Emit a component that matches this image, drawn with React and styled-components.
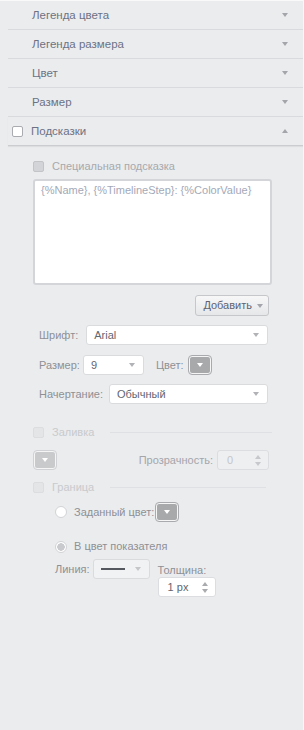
import React from 'react';
import styled, { createGlobalStyle } from 'styled-components';

const GlobalStyle = createGlobalStyle`
    html, body {
        margin: 0;
        padding: 0;
        background: #ebecee;
        font-family: "Liberation Sans", Arial, sans-serif;
    }
`;

const Panel = styled.div`
    width: 303px;
    height: 729px;
    background: #ebecee;
    border-top: 1px solid #f9f9fa;
    border-right: 1px solid #f7f7f8;
    border-bottom: 1px solid #b4b5b9;
    display: flex;
    flex-direction: column;
    font-size: 11px;
    line-height: 13px;
`;

const Header = styled.div`
    height: 28px;
    margin-left: 8px;
    padding-left: ${p => (p.$check ? 4 : 24)}px;
    padding-right: 15px;
    display: flex;
    align-items: center;
    gap: 8px;
    border-bottom: 1px solid ${p => (p.$last ? '#cbccd0' : '#d9dadd')};
    box-shadow: ${p => (p.$last ? '0 1px 1px rgba(0,0,0,0.06)' : 'none')};
    color: #6c7285;
    font-size: 11.5px;
`;

const HeaderTitle = styled.span`
    flex: 1;
`;

const Caret = styled.span`
    width: 0;
    height: 0;
    border-left: 3.5px solid transparent;
    border-right: 3.5px solid transparent;
    border-${p => (p.$up ? 'bottom' : 'top')}: 4px solid ${p => p.$color || '#a3a5aa'};
`;

const Box = styled.span`
    width: 11px;
    height: 11px;
    flex: none;
    border-radius: 2px;
    box-sizing: border-box;
    border: 1px solid ${p => p.$border};
    background: ${p => p.$fill};
`;

const Content = styled.div`
    padding: 0 31px 0 33px;
    display: flex;
    flex-direction: column;
`;

const Row = styled.div`
    display: flex;
    align-items: ${p => p.$align || 'center'};
    gap: ${p => p.$gap || 0}px;
    margin-top: ${p => p.$mt || 0}px;
    padding-left: ${p => p.$indent || 0}px;
    padding-right: ${p => p.$pr || 0}px;
    justify-content: ${p => p.$justify || 'flex-start'};
`;

const Label = styled.span`
    color: ${p => p.$color || '#8e9095'};
    white-space: nowrap;
    margin-right: ${p => p.$mr || 0}px;
    margin-left: ${p => p.$ml || 0}px;
    margin-top: ${p => p.$mt || 0}px;
`;

const TextArea = styled.div`
    flex: 1;
    height: 98px;
    background: #fff;
    border: 2px solid #d4d5d8;
    border-radius: 3px;
    padding: 3px 6px 1px;
    color: #a3a9b8;
`;

const Button = styled.div`
    height: 19px;
    padding: 0 5px 0 7px;
    display: flex;
    align-items: center;
    gap: 5px;
    border: 1px solid #c6c7ca;
    border-radius: 3px;
    background: linear-gradient(#f7f7f8, #e6e7e9);
    color: #5e6371;
    font-size: 11px;
`;

const Select = styled.div`
    width: ${p => p.$w || 0}px;
    height: 18px;
    flex: ${p => (p.$grow ? 1 : 'none')};
    display: flex;
    align-items: center;
    justify-content: space-between;
    padding: 0 8px 0 7px;
    background: ${p => (p.$disabled ? '#f1f2f3' : '#fff')};
    border: 1px solid #dadbdd;
    border-radius: 3px;
    color: #62666f;
`;

const ColorButton = styled.div`
    width: 20px;
    height: 16px;
    flex: none;
    display: flex;
    align-items: center;
    justify-content: center;
    background: ${p => (p.$disabled ? '#c9cacc' : '#a8a9ab')};
    border: 1px solid #f5f5f6;
    outline: 1px solid ${p => (p.$disabled ? '#d0d1d4' : '#a9aaad')};
    border-radius: 3px;
    margin: 1px;
`;

const Spin = styled.div`
    width: ${p => p.$w}px;
    height: 18px;
    display: flex;
    align-items: center;
    justify-content: space-between;
    padding: 0 7px 0 9px;
    background: ${p => (p.$disabled ? '#eeeff1' : '#fff')};
    border: 1px solid #dcdde0;
    border-radius: 3px;
    color: ${p => (p.$disabled ? '#c4c6ca' : '#62666f')};
`;

const SpinArrows = styled.span`
    display: flex;
    flex-direction: column;
    gap: 3px;
`;

const Divider = styled.span`
    flex: 1;
    height: 1px;
    background: #dfe0e3;
    margin-left: 8px;
    margin-right: ${p => p.$mr || 0}px;
`;

const Radio = styled.span`
    width: 12px;
    height: 12px;
    flex: none;
    box-sizing: border-box;
    border-radius: 50%;
    border: 1px solid #d2d3d6;
    background: ${p => (p.$on ? 'radial-gradient(circle, #c9cacd 0 3.5px, #fff 4px)' : '#fff')};
`;

const LineSample = styled.span`
    width: 24px;
    height: 2px;
    background: #55585e;
`;

const Stack = styled.div`
    display: flex;
    flex-direction: column;
    margin-left: 8px;
    margin-top: 5px;
`;

const headers = ['Легенда цвета', 'Легенда размера', 'Цвет', 'Размер'];

export default function App() {
    return (
        <>
            <GlobalStyle />
            <Panel>
                {headers.map(h => (
                    <Header key={h}>
                        <HeaderTitle>{h}</HeaderTitle>
                        <Caret />
                    </Header>
                ))}
                <Header $check $last>
                    <Box $border="#a9abb0" $fill="#fff" />
                    <HeaderTitle>Подсказки</HeaderTitle>
                    <Caret $up />
                </Header>

                <Content>
                    <Row $mt={14} $gap={8}>
                        <Box $border="#c3c4c7" $fill="#d3d4d7" />
                        <Label $color="#a7a9ad">Специальная подсказка</Label>
                    </Row>
                    <Row $mt={6}>
                        <TextArea>{'{%Name}, {%TimelineStep}: {%ColorValue}'}</TextArea>
                    </Row>
                    <Row $mt={10} $justify="flex-end" $pr={3}>
                        <Button>
                            Добавить
                            <Caret />
                        </Button>
                    </Row>
                    <Row $mt={9} $indent={6} $pr={4}>
                        <Label $mr={8}>Шрифт:</Label>
                        <Select $grow>
                            Arial
                            <Caret $color="#b0b2b6" />
                        </Select>
                    </Row>
                    <Row $mt={10} $indent={6}>
                        <Label $mr={3}>Размер:</Label>
                        <Select $w={44}>
                            9
                            <Caret $color="#b0b2b6" />
                        </Select>
                        <Label $ml={12} $mr={4}>Цвет:</Label>
                        <ColorButton>
                            <Caret $color="#fff" />
                        </ColorButton>
                    </Row>
                    <Row $mt={9} $indent={6} $pr={4}>
                        <Label $mr={6}>Начертание:</Label>
                        <Select $grow>
                            Обычный
                            <Caret $color="#b0b2b6" />
                        </Select>
                    </Row>

                    <Row $mt={22} $gap={8}>
                        <Box $border="#dcdde0" $fill="#e4e5e7" />
                        <Label $color="#c8cacd">Заливка</Label>
                        <Divider />
                    </Row>
                    <Row $mt={11} $justify="space-between" $pr={3}>
                        <ColorButton $disabled>
                            <Caret $color="#fff" />
                        </ColorButton>
                        <Row $gap={4}>
                            <Label $color="#a4a6ab">Прозрачность:</Label>
                            <Spin $w={34} $disabled>
                                0
                                <SpinArrows>
                                    <Caret $up $color="#c6c8cb" />
                                    <Caret $color="#c6c8cb" />
                                </SpinArrows>
                            </Spin>
                        </Row>
                    </Row>
                    <Row $mt={11} $gap={8}>
                        <Box $border="#dcdde0" $fill="#e4e5e7" />
                        <Label $color="#c8cacd">Граница</Label>
                        <Divider $mr={6} />
                    </Row>
                    <Row $mt={8} $indent={22} $gap={7}>
                        <Radio />
                        <Label $mr={-6}>Заданный цвет:</Label>
                        <ColorButton>
                            <Caret $color="#fff" />
                        </ColorButton>
                    </Row>
                    <Row $mt={18} $indent={22} $gap={7}>
                        <Radio $on />
                        <Label>В цвет показателя</Label>
                    </Row>
                    <Row $mt={6} $indent={22} $align="flex-start">
                        <Label $mr={3} $mt={4}>Линия:</Label>
                        <Select $w={40} $disabled>
                            <LineSample />
                            <Caret $color="#c4c6ca" />
                        </Select>
                        <Stack>
                            <Label>Толщина:</Label>
                            <Spin $w={40}>
                                1 px
                                <SpinArrows>
                                    <Caret $up $color="#a9abaf" />
                                    <Caret $color="#a9abaf" />
                                </SpinArrows>
                            </Spin>
                        </Stack>
                    </Row>
                </Content>
            </Panel>
        </>
    );
}
